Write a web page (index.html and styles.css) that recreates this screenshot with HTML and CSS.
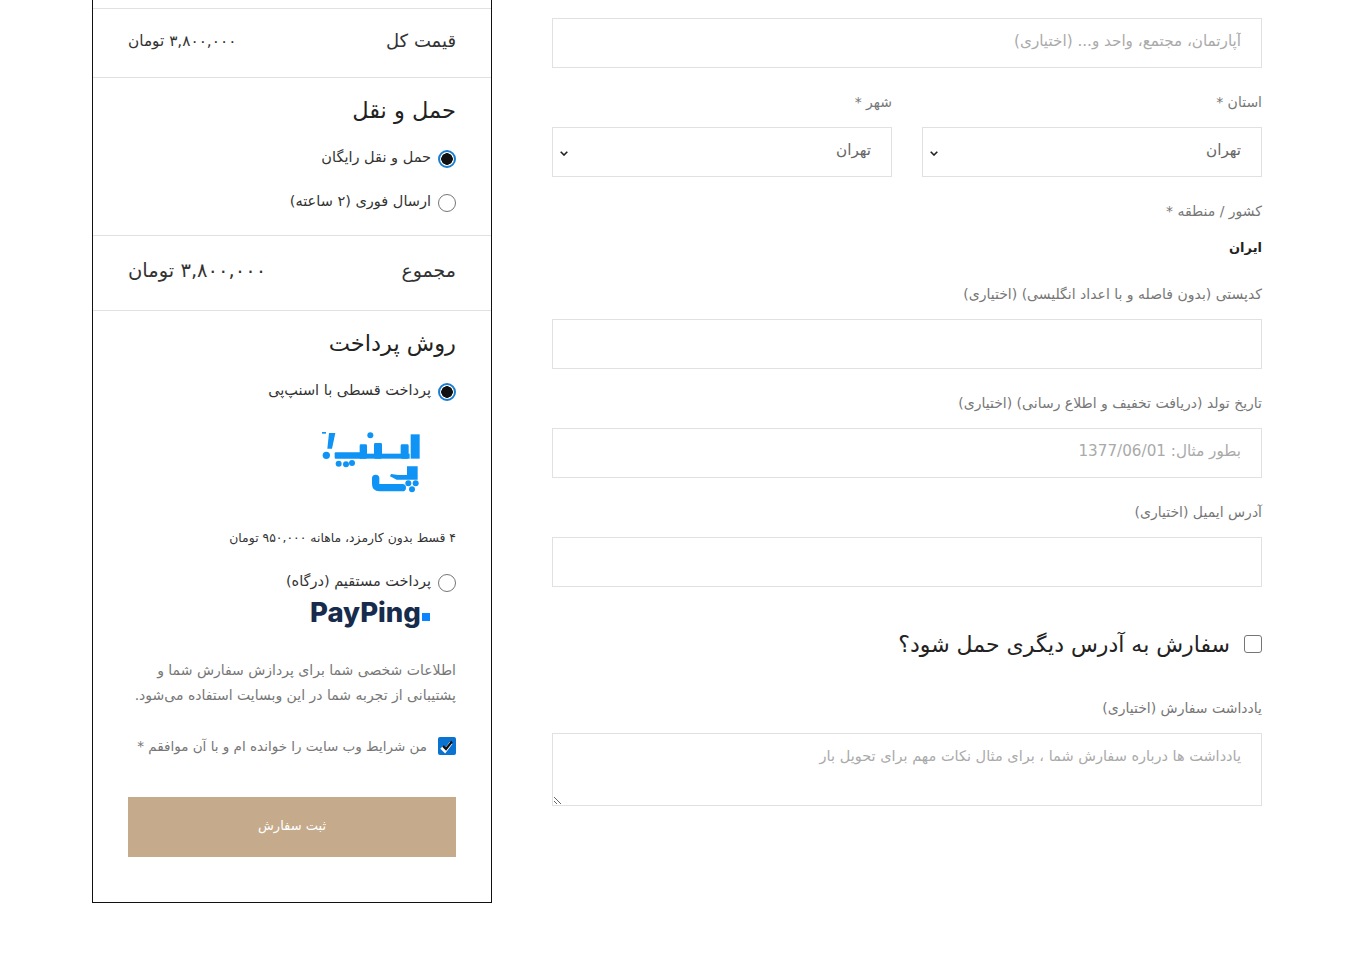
FILE: index.html
```html
<!DOCTYPE html>
<html lang="fa" dir="rtl">
<head>
<meta charset="utf-8">
<title>تسویه حساب</title>
<link rel="stylesheet" href="styles.css">
</head>
<body>
<main class="page">
  <form class="billing">
    <div class="field"><input class="control" type="text" placeholder="آپارتمان، مجتمع، واحد و... (اختیاری)"></div>
    <div class="pair">
      <div class="field">
        <label class="label">استان *</label>
        <select class="control picker"><option>تهران</option></select>
      </div>
      <div class="field">
        <label class="label">شهر *</label>
        <select class="control picker"><option>تهران</option></select>
      </div>
    </div>
    <div class="field">
      <label class="label">کشور / منطقه *</label>
      <div class="static">ایران</div>
    </div>
    <div class="field">
      <label class="label">کدپستی (بدون فاصله و با اعداد انگلیسی) (اختیاری)</label>
      <input class="control" type="text">
    </div>
    <div class="field">
      <label class="label">تاریخ تولد (دریافت تخفیف و اطلاع رسانی) (اختیاری)</label>
      <input class="control" type="text" placeholder="بطور مثال: 1377/06/01">
    </div>
    <div class="field">
      <label class="label">آدرس ایمیل (اختیاری)</label>
      <input class="control" type="text">
    </div>
    <div class="ship-other">
      <span class="box"></span>
      <span class="ship-text">سفارش به آدرس دیگری حمل شود؟</span>
    </div>
    <div class="field">
      <label class="label">یادداشت سفارش (اختیاری)</label>
      <textarea class="control note" placeholder="یادداشت ها درباره سفارش شما ، برای مثال نکات مهم برای تحویل بار"></textarea>
    </div>
  </form>

  <aside class="summary">
    <div class="row-top"></div>
    <div class="row-line subtotal">
      <span>قیمت کل</span>
      <span class="price">۳,۸۰۰,۰۰۰ تومان</span>
    </div>
    <section class="shipping">
      <h3 class="heading">حمل و نقل</h3>
      <div class="option"><span class="radio on"></span><span class="option-text">حمل و نقل رایگان</span></div>
      <div class="option"><span class="radio"></span><span class="option-text">ارسال فوری (۲ ساعته)</span></div>
    </section>
    <div class="row-line total">
      <span class="total-label">مجموع</span>
      <span class="total-price">۳,۸۰۰,۰۰۰ تومان</span>
    </div>
    <section class="payment">
      <h3 class="heading">روش پرداخت</h3>
      <div class="option"><span class="radio on"></span><span class="option-text">پرداخت قسطی با اسنپ‌پی</span></div>
      <svg class="snap-logo" viewBox="0 0 360 225" aria-label="اسنپ پی">
        <g fill="#0f94f5" transform="translate(24 9)">
          <rect x="278" y="22" width="27" height="73"/>
          <rect x="190" y="80" width="85" height="15"/>
          <rect x="248" y="52" width="24" height="43" rx="4"/>
          <rect x="168" y="48" width="24" height="47" rx="4"/>
          <rect x="125" y="52" width="22" height="43" rx="4"/>
          <rect x="125" y="80" width="65" height="15"/>
          <rect x="50" y="76" width="80" height="19" rx="3"/>
          <circle cx="157" cy="25" r="9"/>
          <path d="M33 18H52L42 65H28Z"/>
          <circle cx="25" cy="85" r="11"/>
          <rect x="12" y="15" width="12" height="5"/>
          <circle cx="62" cy="110" r="9"/>
          <circle cx="84" cy="112" r="9"/>
          <circle cx="102" cy="108" r="9"/>
        </g>
        <g transform="translate(165 105)">
          <path d="M32 58v17q0 11 11 11H112" fill="none" stroke="#0f94f5" stroke-width="22" stroke-linecap="round"/>
          <path d="M126 22H158V62H95L75 52L78 45L100 48H126Z" fill="#0f94f5"/>
          <circle cx="130" cy="73" r="9" fill="#0f94f5"/>
          <circle cx="152" cy="73" r="9" fill="#0f94f5"/>
          <circle cx="141" cy="91" r="9" fill="#0f94f5"/>
        </g>
      </svg>
      <p class="installment">۴ قسط بدون کارمزد، ماهانه ۹۵۰,۰۰۰ تومان</p>
      <div class="option"><span class="radio"></span><span class="option-text">پرداخت مستقیم (درگاه)</span></div>
      <div class="payping" dir="ltr"><span class="payping-text">PayPing</span><span class="payping-dot"></span></div>
      <p class="privacy">اطلاعات شخصی شما برای پردازش سفارش شما و پشتیبانی از تجربه شما در این وبسایت استفاده می‌شود.</p>
      <div class="terms">
        <span class="tick"><svg viewBox="0 0 18 18"><path d="M3.5 10.5l3.5 3.5L13 6" fill="none" stroke="#fff" stroke-width="3.4"/><path d="M5 9l3 3 6-7.5" fill="none" stroke="#111" stroke-width="2.2"/></svg></span>
        <span>من شرایط وب سایت را خوانده ام و با آن موافقم *</span>
      </div>
      <button class="submit" type="button">ثبت سفارش</button>
    </section>
  </aside>
</main>
</body>
</html>
```
FILE: styles.css
```css
* { box-sizing: border-box; }
html, body { margin: 0; padding: 0; background: #fff; }
body {
  font-family: "DejaVu Sans", "Noto Sans", sans-serif;
  color: #333;
  overflow: hidden;
  height: 962px;
}
.page {
  display: flex;
  gap: 60px;
  width: 1170px;
  margin-right: 88px;
  align-items: flex-start;
}
.billing {
  width: 710px;
  padding-top: 18px;
  display: flex;
  flex-direction: column;
}
.field { margin-bottom: 22px; display: flex; flex-direction: column; }
.pair { display: grid; grid-template-columns: 340px 340px; gap: 30px; }
.label {
  display: block;
  font-size: 14px;
  line-height: 24px;
  color: #777;
  margin-bottom: 13px;
}
.control {
  width: 100%;
  height: 50px;
  border: 1px solid #e1e1e1;
  background: #fff;
  padding: 0 20px 4px;
  font-family: "DejaVu Sans", Roboto, sans-serif;
  font-size: 15.2px;
  color: #666;
  border-radius: 0;
  outline: none;
}
.control::placeholder { color: #aaa; opacity: 1; }
.picker {
  appearance: none;
  padding: 0 20px 4px 20px;
  background-image: url("data:image/svg+xml,%3Csvg xmlns='http://www.w3.org/2000/svg' width='8' height='5' viewBox='0 0 8 5'%3E%3Cpath d='M.7.7L4 4l3.3-3.3' fill='none' stroke='%23222' stroke-width='1.6'/%3E%3C/svg%3E");
  background-repeat: no-repeat;
  background-position: 7px 23px;
}
.static { font-size: 13px; font-weight: 700; line-height: 24px; color: #222; }
.ship-other {
  display: flex;
  align-items: center;
  gap: 14px;
  height: 36px;
  margin: 17px 0 34px;
  font-size: 22px;
  color: #222;
}
.box {
  width: 18px;
  height: 18px;
  border: 1px solid #767676;
  border-radius: 3px;
  background: #fff;
  flex: none;
}
.note { height: 73px; padding: 9px 20px; line-height: 26px; font-size: 14.5px; }

.summary {
  width: 400px;
  height: 903px;
  flex: none;
  border: 1px solid #111;
  border-top: 0;
}
.row-top { height: 9px; border-bottom: 1px solid #e1e1e1; }
.row-line {
  display: flex;
  justify-content: space-between;
  align-items: center;
  padding: 0 35px;
  border-bottom: 1px solid #e1e1e1;
}
.subtotal { height: 69px; padding-bottom: 5px; font-size: 18px; color: #333; }
.price { font-size: 15.3px; }
.total { height: 75px; padding-bottom: 6px; }
.total-label { font-size: 19px; }
.total-price { font-size: 19.5px; }
.shipping {
  height: 158px;
  padding: 16px 35px 0;
  border-bottom: 1px solid #e1e1e1;
}
.payment { padding: 16px 35px 0; }
.heading {
  margin: 0;
  font-size: 22.5px;
  font-weight: 400;
  line-height: 32px;
  color: #222;
}
.option {
  display: flex;
  align-items: center;
  gap: 7px;
  height: 24px;
  margin-top: 20px;
  font-size: 14.5px;
  color: #333;
}
.option-text { padding-bottom: 2px; }
.radio {
  width: 18px;
  height: 18px;
  margin-top: 2px;
  flex: none;
  border: 1px solid #767676;
  border-radius: 50%;
  background: #fff;
}
.radio.on {
  border: 2px solid #1a7fd0;
  background: radial-gradient(circle, #111 0 5.5px, #fff 6px);
}
.snap-logo {
  display: block;
  width: 120px;
  height: 75px;
  margin: 21px 26px 0 0;
}
.installment { margin: 27px 0 0; font-size: 12.4px; line-height: 24px; color: #333; }
.payping {
  display: flex;
  justify-content: flex-start;
  align-items: center;
  gap: 1px;
  height: 30px;
  margin-top: 3px;
  width: 122px;
  margin-right: 24px;
}
.payping-text {
  font-family: Inter, sans-serif;
  font-weight: 800;
  font-size: 27.5px;
  letter-spacing: 0;
  color: #172b4d;
}
.payping-dot { width: 8px; height: 8px; background: #0a84ff; align-self: flex-end; margin: 0 0 6px 0; }
.privacy {
  margin: 31px 0 0;
  font-size: 14px;
  line-height: 25px;
  color: #777;
}
.terms {
  display: flex;
  align-items: center;
  gap: 11px;
  height: 24px;
  margin-top: 26px;
  font-size: 13.5px;
  color: #777;
}
.tick {
  width: 18px;
  height: 18px;
  flex: none;
  background: #0a72d0;
  border-radius: 2px;
  display: block;
}
.tick svg { display: block; width: 18px; height: 18px; }
.submit {
  display: block;
  width: 100%;
  height: 60px;
  margin-top: 39px;
  padding-bottom: 4px;
  border: 0;
  background: #c5ab8b;
  color: #fff;
  font-family: inherit;
  font-size: 13px;
}
```
